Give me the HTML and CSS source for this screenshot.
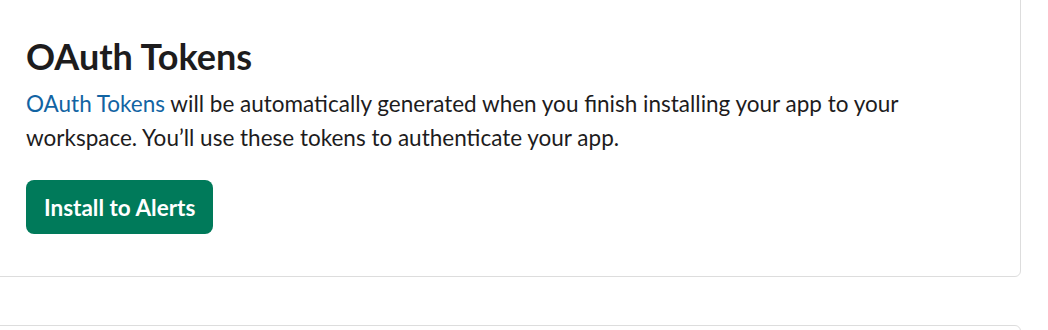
FILE: index.html
```html
<!DOCTYPE html>
<html lang="en">
<head>
<meta charset="utf-8">
<title>OAuth Tokens</title>
<link rel="stylesheet" href="styles.css">
</head>
<body>
<main class="page">
  <section class="card">
    <h2 class="card-title">OAuth Tokens</h2>
    <p class="card-text"><a class="link" href="#">OAuth Tokens</a> will be automatically generated when you finish installing your app to your workspace. You’ll use these tokens to authenticate your app.</p>
    <button class="btn-primary" type="button">Install to Alerts</button>
  </section>
  <section class="card card-next"></section>
</main>
</body>
</html>
```

FILE: styles.css
```css
html, body {
  margin: 0;
  padding: 0;
  background: #fff;
}
body {
  font-family: Lato, "Noto Sans", sans-serif;
  color: #1d1c1d;
  overflow: hidden;
}
.page {
  display: flex;
  flex-direction: column;
  gap: 48px;
  margin: -10px 27px 0 -20px;
}
.card {
  border: 1px solid #dddddd;
  border-radius: 6px;
  padding: 43px 60px 42px 45px;
  display: flex;
  flex-direction: column;
  align-items: flex-start;
}
.card-next {
  height: 100px;
  padding: 0;
}
.card-title {
  margin: 0;
  font-size: 36px;
  font-weight: 700;
  line-height: 45px;
}
.card-text {
  margin: 8px 0 25px;
  font-size: 22.5px;
  line-height: 34px;
}
.link {
  color: #1264a3;
  text-decoration: none;
}
.btn-primary {
  font-family: Lato, "Noto Sans", sans-serif;
  font-size: 22.5px;
  font-weight: 700;
  color: #fff;
  background: #007a5a;
  border: none;
  border-radius: 8px;
  height: 54px;
  padding: 0 18px;
  cursor: pointer;
}
```
